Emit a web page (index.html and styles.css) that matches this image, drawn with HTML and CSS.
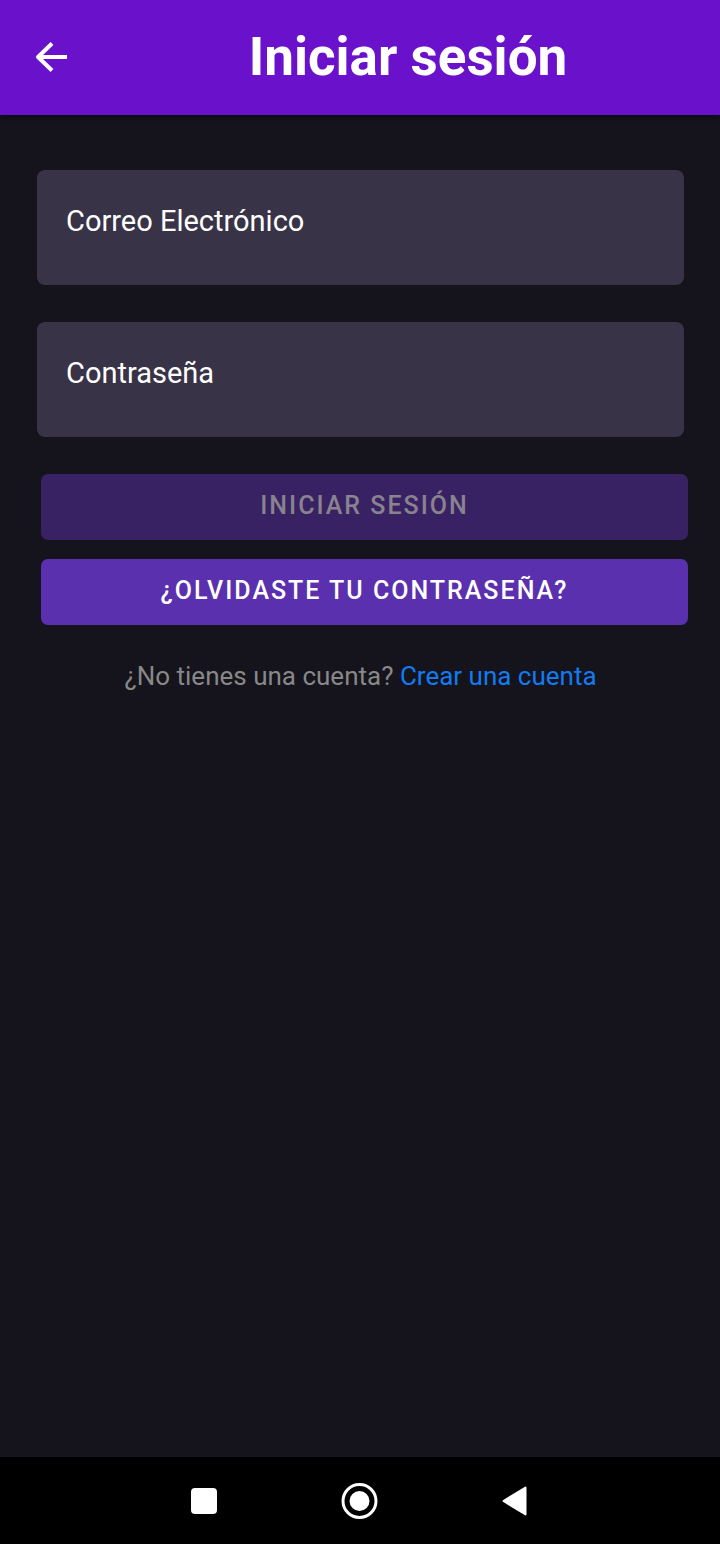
FILE: index.html
```html
<!DOCTYPE html>
<html lang="es">
<head>
<meta charset="utf-8">
<meta name="viewport" content="width=device-width, initial-scale=1">
<title>Iniciar sesión</title>
<link rel="stylesheet" href="styles.css">
</head>
<body>
<header class="toolbar">
  <button class="back" type="button" aria-label="Volver">
    <svg viewBox="0 0 32 30" width="32" height="30" fill="none" stroke="currentColor" stroke-width="4" stroke-linejoin="round"><path d="M32 15H3M17 1.500 3 15l14 13.500"/></svg>
  </button>
  <h1 class="title">Iniciar sesión</h1>
</header>
<main class="content">
  <form class="form">
    <div class="field">
      <label class="label" for="email">Correo Electrónico</label>
      <input class="input" id="email" type="email">
    </div>
    <div class="field">
      <label class="label" for="password">Contraseña</label>
      <input class="input" id="password" type="password">
    </div>
    <div class="actions">
      <button class="button" type="submit" disabled>INICIAR SESIÓN</button>
      <button class="button" type="button">¿OLVIDASTE TU CONTRASEÑA?</button>
    </div>
  </form>
  <p class="signup">¿No tienes una cuenta? <a class="link" href="#">Crear una cuenta</a></p>
</main>
<nav class="navbar" aria-label="Sistema">
  <button class="nav-button" type="button" aria-label="Recientes">
    <svg viewBox="0 0 40 40" width="40" height="40"><rect x="6" y="7" width="26" height="26" rx="4" fill="currentColor"/></svg>
  </button>
  <button class="nav-button" type="button" aria-label="Inicio">
    <svg viewBox="0 0 40 40" width="40" height="40"><circle cx="19.500" cy="20" r="16.500" fill="none" stroke="currentColor" stroke-width="3"/><circle cx="19.500" cy="20" r="10" fill="currentColor"/></svg>
  </button>
  <button class="nav-button" type="button" aria-label="Atrás">
    <svg viewBox="0 0 40 40" width="40" height="40"><path d="M8.500 20 30.500 6.500v27z" fill="currentColor" stroke="currentColor" stroke-width="2" stroke-linejoin="round"/></svg>
  </button>
</nav>
</body>
</html>
```
FILE: styles.css
```css
* {
  box-sizing: border-box;
}

body {
  margin: 0;
  min-height: 100vh;
  display: flex;
  flex-direction: column;
  background: #15131c;
  color: #fff;
  font-family: Roboto, sans-serif;
}

.toolbar {
  display: flex;
  align-items: center;
  height: 115px;
  padding: 0 35px 2px;
  background: #6a11cb;
  box-shadow: 0 2px 6px rgba(0, 0, 0, 0.5);
}

.back,
.nav-button {
  display: flex;
  padding: 0;
  border: 0;
  background: none;
  color: inherit;
}

.title {
  flex: 1;
  margin: 0;
  padding-left: 64px;
  font-size: 53px;
  line-height: 60px;
  font-weight: 700;
  text-align: center;
}

.content {
  flex: 1;
  padding: 55px 36px 0 37px;
}

.form {
  display: flex;
  flex-direction: column;
  gap: 37px;
}

.field {
  display: flex;
  flex-direction: column;
  height: 115px;
  padding: 32px 29px 0;
  border-radius: 8px;
  background: #393347;
}

.label {
  font-size: 29px;
  line-height: 38px;
}

.input {
  width: 100%;
  height: 40px;
  padding: 0;
  border: 0;
  outline: 0;
  background: none;
  color: inherit;
  font: inherit;
  font-size: 29px;
}

.actions {
  display: flex;
  flex-direction: column;
  gap: 19px;
  margin: 0 -4px 0 4px;
}

.button {
  height: 66px;
  padding: 0 0 2px;
  border: 0;
  border-radius: 7px;
  background: #5b30ae;
  color: #fff;
  font-family: inherit;
  font-size: 25px;
  font-weight: 500;
  line-height: 32px;
  letter-spacing: 2px;
}

.button:disabled {
  background: #392263;
  color: #88838f;
}

.signup {
  margin: 35px 0 0;
  color: #888;
  font-size: 26px;
  line-height: 32px;
  text-align: center;
}

.link {
  color: #127bf0;
  text-decoration: none;
}

.navbar {
  display: flex;
  justify-content: center;
  align-items: center;
  gap: 115px;
  height: 87px;
  background: #000;
}
```
